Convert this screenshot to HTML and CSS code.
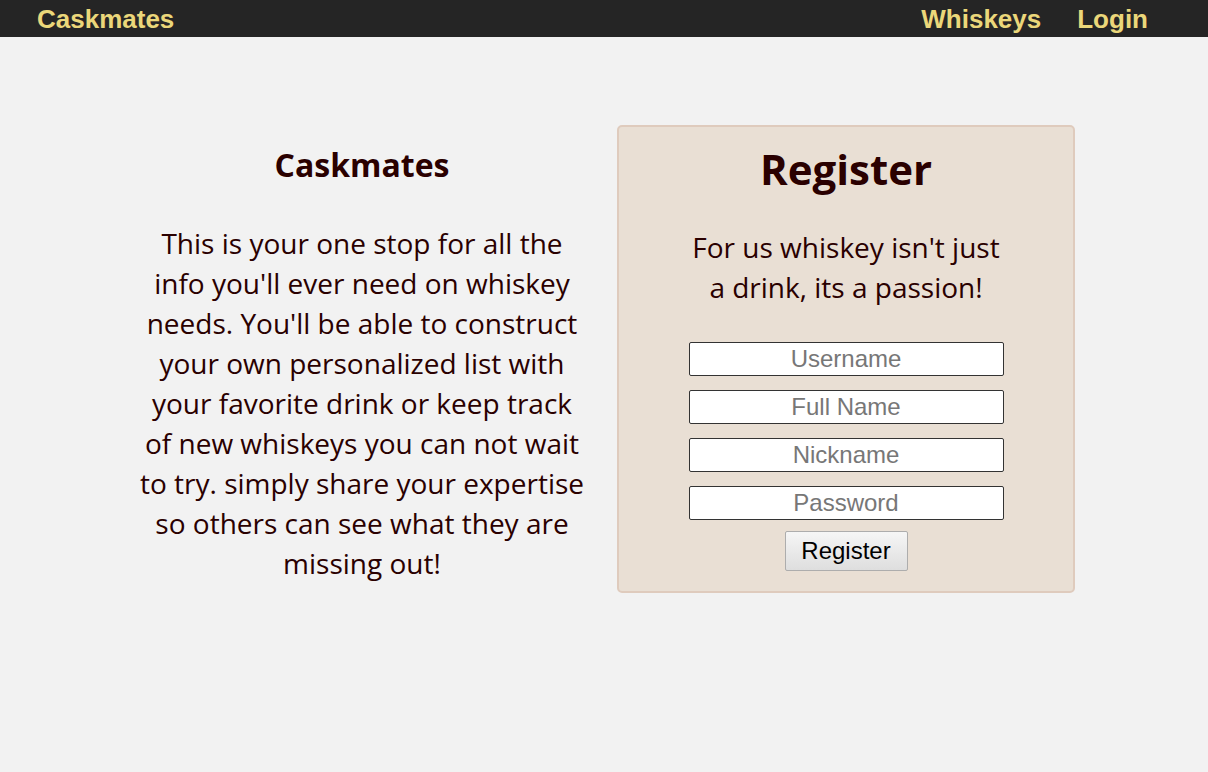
FILE: index.html
```html
<!DOCTYPE html>
<html>
<head>
<meta charset="utf-8">
<link rel="stylesheet" href="styles.css">
</head>
<body>
<nav class="nav">
  <a class="brand" href="#">Caskmates</a>
  <div class="links">
    <a href="#">Whiskeys</a>
    <a href="#">Login</a>
  </div>
</nav>
<main class="main">
  <section class="about">
    <h2 class="about-title">Caskmates</h2>
    <p class="about-text">This is your one stop for all the info you'll ever need on whiskey needs. You'll be able to construct your own personalized list with your favorite drink or keep track of new whiskeys you can not wait to try. simply share your expertise so others can see what they are missing out!</p>
  </section>
  <section class="card">
    <h1 class="card-title">Register</h1>
    <p class="card-sub">For us whiskey isn't just<br>a drink, its a passion!</p>
    <form class="form">
      <input class="field" type="text" placeholder="Username">
      <input class="field" type="text" placeholder="Full Name">
      <input class="field" type="text" placeholder="Nickname">
      <input class="field" type="password" placeholder="Password">
      <button class="btn" type="button">Register</button>
    </form>
  </section>
</main>
</body>
</html>
```
FILE: styles.css
```css
* { box-sizing: border-box; }
body {
  margin: 0;
  background: #f2f2f2;
  font-family: "Open Sans", "Noto Sans", sans-serif;
  color: #2a0000;
}
.nav {
  height: 37px;
  background: #252525;
  display: flex;
  justify-content: space-between;
  align-items: center;
  padding: 2px 60px 0 37px;
}
.nav a {
  font-family: "Liberation Sans", Arial, sans-serif;
  font-weight: bold;
  font-size: 26px;
  color: #ebd77a;
  text-decoration: none;
}
.links { display: flex; gap: 36px; }
.main {
  display: flex;
  justify-content: center;
  align-items: flex-start;
  gap: 32px;
  margin-top: 88px;
  padding-left: 2px;
}
.about {
  width: 450px;
  text-align: center;
  padding: 18px 0 0 4px;
}
.about-title {
  margin: 0;
  font-size: 32px;
  font-weight: bold;
  line-height: 44px;
}
.about-text {
  margin: 36px 0 0;
  font-size: 28px;
  line-height: 40px;
}
.card {
  width: 458px;
  background: #e9dfd4;
  border: 2px solid #dfcbbd;
  border-radius: 5px;
  text-align: center;
  padding: 14px 0 20px;
}
.card-title {
  margin: 0;
  font-size: 42px;
  line-height: 56px;
  font-weight: bold;
}
.card-sub {
  margin: 30px 0 0;
  font-size: 28px;
  line-height: 40px;
}
.form {
  display: flex;
  flex-direction: column;
  align-items: center;
  gap: 14px;
  margin-top: 35px;
}
.field {
  width: 315px;
  height: 34px;
  border: 1px solid #333;
  border-radius: 2px;
  background: #fff;
  text-align: center;
  font-family: "Liberation Sans", Arial, sans-serif;
  font-size: 24px;
  padding: 0;
}
.field::placeholder { color: #777; }
.btn {
  margin-top: -3px;
  width: 123px;
  height: 40px;
  font-family: "Liberation Sans", Arial, sans-serif;
  font-size: 24px;
  color: #000;
  background: linear-gradient(#f6f6f6, #dedede);
  border: 1px solid #adadad;
  border-radius: 2px;
}
```
